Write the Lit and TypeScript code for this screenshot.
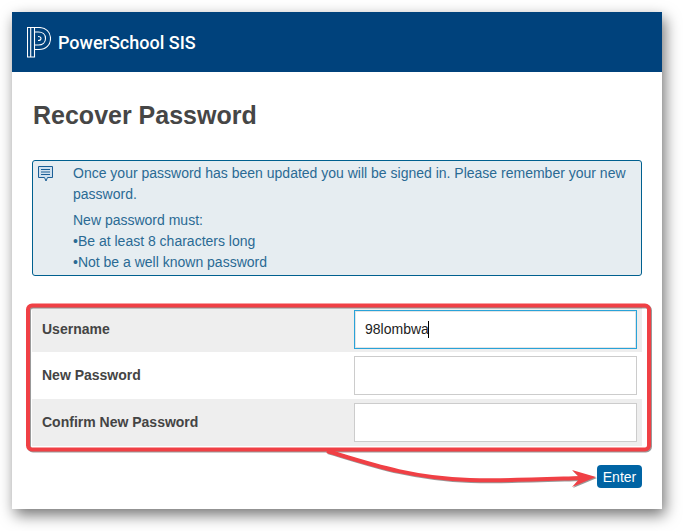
import { LitElement, html, css } from "lit";
import { customElement } from "lit/decorators.js";

@customElement("app-root")
export class AppRoot extends LitElement {
  static styles = css`
    :host { display: block; width: 683px; height: 531px; background: #fff; font-family: "Liberation Sans", Arial, sans-serif; position: relative; overflow: hidden; }
    .page { padding: 12px 21px 22px 12px; }
    .card { width: 650px; height: 497px; background: #fff; box-shadow: 3px 6px 14px rgba(0,0,0,.55); display: flex; flex-direction: column; }
    .hdr { height: 60px; background: #00427c; display: flex; align-items: center; padding-left: 15px; gap: 7px; color: #fff; font-family: "Roboto", "Liberation Sans", sans-serif; font-size: 18px; font-weight: 500; box-sizing: border-box; }
    .body { padding: 0 20px 0 20px; flex: 1; display: flex; flex-direction: column; }
    h1 { margin: 29px 0 0 1px; font-size: 25px; line-height: 28px; font-weight: 700; color: #464646; }
    .note { margin-top: 31px; height: 116px; box-sizing: border-box; border: 1px solid #00608f; border-radius: 3px; background: #e6edf1; color: #2a6a94; font-size: 14px; line-height: 21px; padding: 2px 14px 0 40px; position: relative; }
    .note p { margin: 0; }
    .note p + p { margin-top: 5px; }
    .note svg { position: absolute; left: 5px; top: 5px; }
    .form { margin-top: 30px; display: flex; flex-direction: column; }
    .row { display: flex; align-items: center; justify-content: space-between; height: 47px; box-sizing: border-box; padding: 0 0 1px 10px; font-size: 14px; font-weight: 700; color: #444; }
    .row.first { height: 46px; padding-bottom: 0; }
    .row.alt { background: #eeeeee; }
    .field { width: 283px; height: 39px; box-sizing: border-box; margin-right: 5px; border: 1px solid #ccc; background: #fff; font-weight: 400; color: #222; font-size: 14px; display: flex; align-items: center; padding-left: 10px; }
    .field.focus { border: 1px solid #29a3d9; box-shadow: inset 0 0 0 1px #e4e4e4; }
    .caret { display: inline-block; width: 1px; height: 17px; background: #000; margin-left: -1px; }
    .foot { display: flex; justify-content: flex-end; margin-top: 19px; }
    .btn { width: 45px; height: 23px; background: #0064a4; color: #fff; font-size: 14px; border-radius: 4px; display: flex; align-items: center; justify-content: center; }
    .anno { position: absolute; left: 0; top: 0; pointer-events: none; filter: drop-shadow(1px 1px 0.4px rgba(0,0,0,.4)); }
  `;

  render() {
    return html`<div class="page"><div class="card">
      <div class="hdr">
        <svg width="24" height="31" viewBox="0 0 24 31" fill="none" stroke="#fff" stroke-width="1.1">
          <path d="M.5 .5H7.5V30H.5Z M3.7 .5V30" />
          <path d="M7.5 .5H12C19 .5 23.5 5 23.5 11.5S19 22.5 12 22.5H7.5" />
          <path d="M7.5 5H11.5C15.5 5 18.5 7.5 18.5 11.5S15.5 18 11.5 18H7.5" />
          <path d="M11 9.5C13 9.5 14 10.5 14 11.5S13 13.5 11 13.5" />
        </svg>
        <span>PowerSchool SIS</span>
      </div>
      <div class="body">
        <h1>Recover Password</h1>
        <div class="note">
          <svg width="15" height="16" viewBox="0 0 15 16"><path d="M.5 .5H14.5V11.5H9.5L8 15 6.5 11.5H.5Z" fill="#cfe0ee" stroke="#1b5f96"/><path d="M3 3.5H12M3 6H12M3 8.5H12" stroke="#1b5f96" stroke-width="1.2"/></svg>
          <p>Once your password has been updated you will be signed in. Please remember your new password.</p>
          <p>New password must:<br>•Be at least 8 characters long<br>•Not be a well known password</p>
        </div>
        <div class="form">
          <div class="row alt first"><span>Username</span><div class="field focus"><span>98lombwa</span><i class="caret"></i></div></div>
          <div class="row"><span>New Password</span><div class="field"></div></div>
          <div class="row alt"><span>Confirm New Password</span><div class="field"></div></div>
        </div>
        <div class="foot"><div class="btn">Enter</div></div>
      </div>
    </div></div>
    <svg class="anno" width="683" height="531" fill="none">
      <rect x="28" y="305.5" width="621" height="144" rx="4" stroke="#f04045" stroke-width="4" />
      <path d="M327 451C370 464 410 478 470 480C510 481 550 479 580 478" stroke="#f04045" stroke-width="4" />
      <path d="M596 477L572 470L580 478L572 487Z" fill="#f04045" />
    </svg>`;
  }
}
